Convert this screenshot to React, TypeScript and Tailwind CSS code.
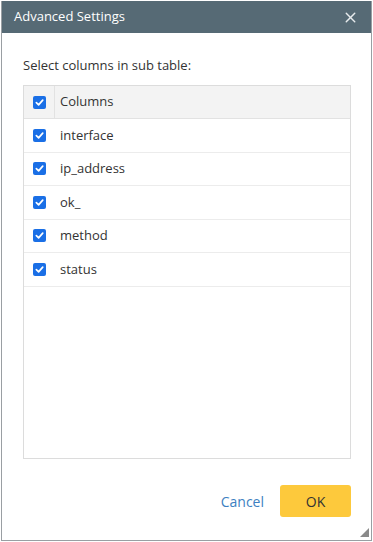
import { X } from 'lucide-react';

const COLUMNS = ['interface', 'ip_address', 'ok_', 'method', 'status'];

function Check() {
  return (
    <span className="flex h-[13px] w-[13px] shrink-0 items-center justify-center rounded-[2px] bg-[#1a6fe6]">
      <svg width="9" height="9" viewBox="0 0 10 10" fill="none">
        <path d="M1.5 5.2 L4 7.6 L8.6 2.4" stroke="white" strokeWidth="1.9" strokeLinecap="round" strokeLinejoin="round" />
      </svg>
    </span>
  );
}

export default function App() {
  return (
    <div className="h-[542px] w-[373px] bg-white pt-px pl-px font-['Open_Sans',sans-serif]">
      <div className="relative flex h-[540px] w-[371px] flex-col border-x border-b border-[#9a9fa3] bg-white">
        {/* Header */}
        <div className="flex h-[32px] items-center justify-between bg-[#566a75] pr-[12px] pl-[12px]">
          <span className="text-[13px] text-white">Advanced Settings</span>
          <X size={17} strokeWidth={2} className="text-[#e8ecee]" />
        </div>

        <div className="flex flex-1 flex-col pt-[23px] pr-[20px] pl-[21px]">
          <div className="text-[13px] leading-[18px] text-[#333]">Select columns in sub table:</div>

          {/* Table */}
          <div className="mt-[11px] h-[374px] w-[328px] border border-[#dcdcdc]">
            <div className="flex h-[33px] items-center border-b border-[#e2e2e2] bg-[#f3f3f3]">
              <div className="flex h-full w-[31px] items-center justify-center border-r border-[#e2e2e2]">
                <Check />
              </div>
              <span className="pl-[5px] text-[13px] text-[#333]">Columns</span>
            </div>
            {COLUMNS.map((col) => (
              <div key={col} className="flex h-[33.5px] items-center border-b border-[#ececec]">
                <div className="flex w-[31px] justify-center">
                  <Check />
                </div>
                <span className="pl-[5px] text-[13px] text-[#333]">{col}</span>
              </div>
            ))}
          </div>

          {/* Footer */}
          <div className="mt-[26px] flex items-center justify-end gap-[16px]">
            <button className="text-[14px] text-[#3d7fc1]">Cancel</button>
            <button className="h-[32px] w-[71px] rounded-[3px] bg-[#fdc93c] text-[14px] text-[#333]">OK</button>
          </div>
        </div>

        {/* resize grip */}
        <svg className="absolute right-[2px] bottom-[3px]" width="9" height="9" viewBox="0 0 9 9">
          <path d="M9 0 L9 9 L0 9 Z" fill="#8a8a8a" />
        </svg>
      </div>
    </div>
  );
}
